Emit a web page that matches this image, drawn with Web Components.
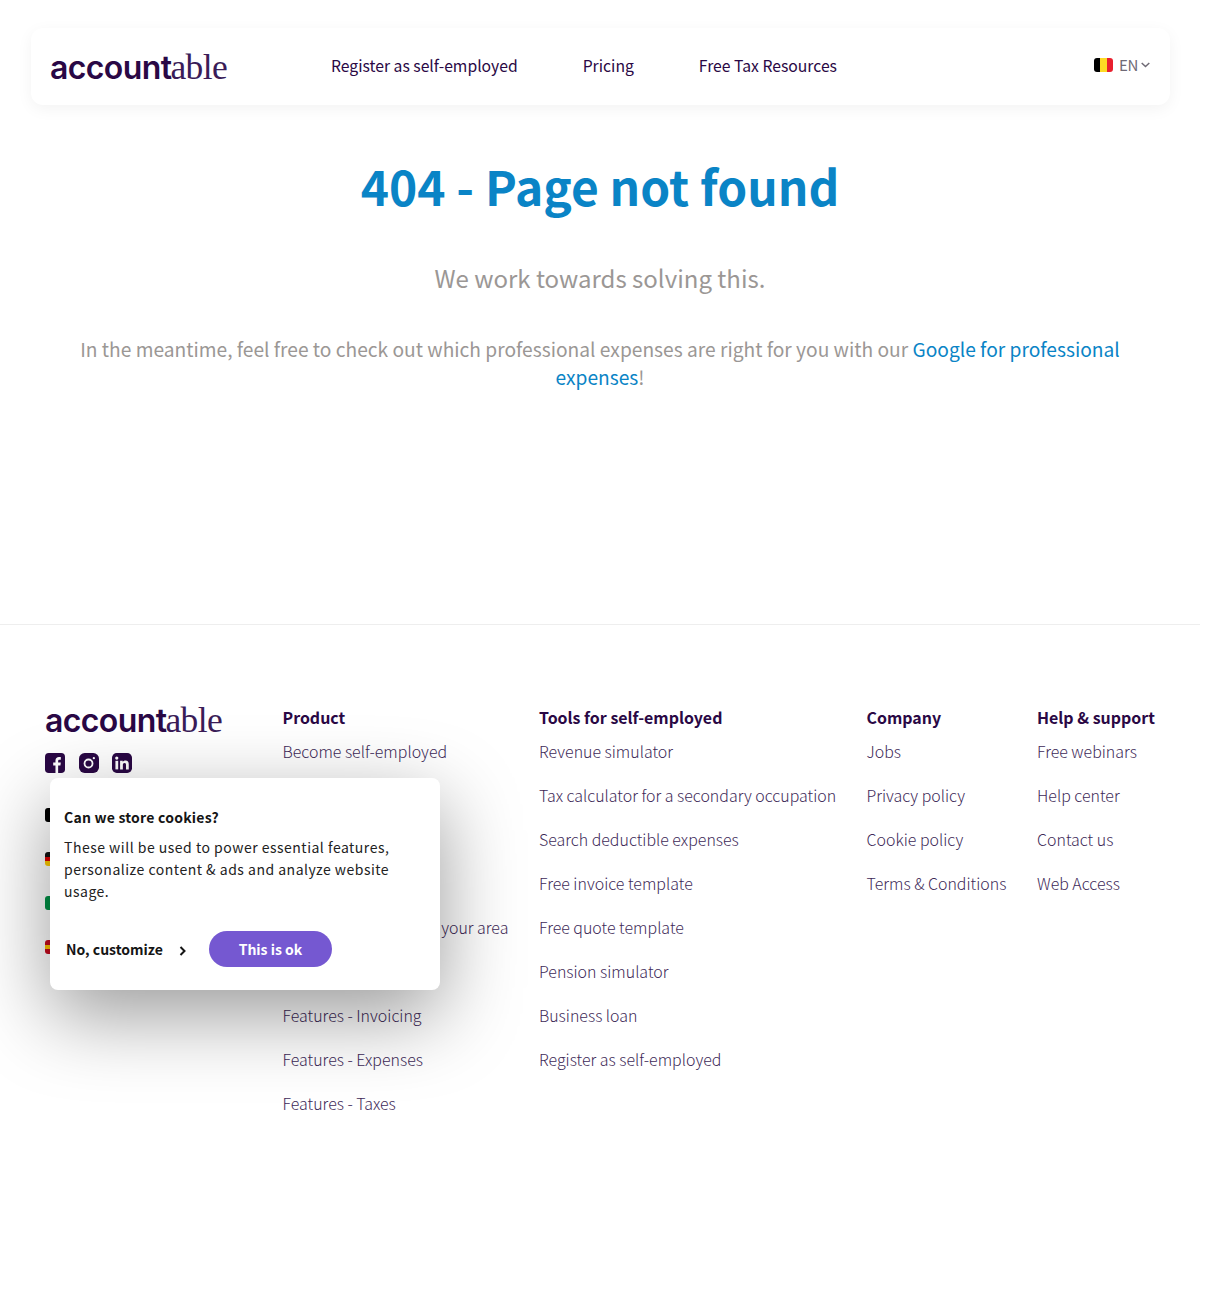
<!DOCTYPE html>
<html lang="en">
<head>
<meta charset="utf-8">
<title>404 - Page not found</title>
<style>
    html, body { margin: 0; padding: 0; background: #fff; }
    body {
        width: 1200px;
        font-family: "Noto Sans CJK JP", "Open Sans", sans-serif;
        color: #2a0845;
    }
</style>
</head>
<body>
<site-nav></site-nav>
<not-found></not-found>
<site-footer></site-footer>
<cookie-popup></cookie-popup>

<script>
const FONT = '"Noto Sans CJK JP", "Open Sans", sans-serif';

// logo: bold round letters + thin serif letters
class AppLogo extends HTMLElement {
    constructor() {
        super();
        this.attachShadow({ mode: "open" });
        this.shadowRoot.innerHTML = `
            <style>
                :host { display: block; color: #2a0845; white-space: nowrap; line-height: 40px; height: 40px; }
                .a { font: 600 32px/40px Inter, "Liberation Sans", sans-serif; letter-spacing: -0.6px; }
                .b { font: 400 35.5px/40px "Liberation Serif", serif; letter-spacing: -0.6px; margin-left: -1px; color: #3a1c58; }
            </style>
            <span class="a">account</span><span class="b">able</span>
        `;
    }
}
customElements.define("app-logo", AppLogo);

class FlagIcon extends HTMLElement {
    constructor() {
        super();
        this.attachShadow({ mode: "open" });
        const colors = (this.getAttribute("colors") || "#000,#fdda24,#e8202e").split(",");
        const dir = this.getAttribute("dir") === "h" ? "to bottom" : "to right";
        const n = colors.length;
        const stops = colors.map((c, i) => `${c} ${i / n * 100}% ${(i + 1) / n * 100}%`).join(",");
        this.shadowRoot.innerHTML = `
            <style>
                :host { display: block; width: 19px; height: 14px; border-radius: 3px; overflow: hidden; background: linear-gradient(${dir}, ${stops}); }
            </style>
        `;
    }
}
customElements.define("flag-icon", FlagIcon);

class LangPicker extends HTMLElement {
    constructor() {
        super();
        this.attachShadow({ mode: "open" });
        this.shadowRoot.innerHTML = `
            <style>
                :host { display: flex; align-items: center; font: 400 15px/20px ${FONT}; color: #6f6a75; letter-spacing: -.3px; padding-bottom: 3px; }
                span { margin-left: 6px; }
                svg { margin-left: 3px; display: block; }
            </style>
            <flag-icon></flag-icon>
            <span>EN</span>
            <svg width="9" height="6" viewBox="0 0 9 6" fill="none" stroke="#6f6a75" stroke-width="1.5"><path d="M.7 1l3.8 3.5L8.300 1"/></svg>
        `;
    }
}
customElements.define("lang-picker", LangPicker);

class SiteNav extends HTMLElement {
    constructor() {
        super();
        this.attachShadow({ mode: "open" });
        this.shadowRoot.innerHTML = `
            <style>
                :host { display: block; padding: 28px 30px 0 31px; }
                nav {
                    height: 77px;
                    box-sizing: border-box;
                    padding: 0 20px 0 19px;
                    display: flex;
                    align-items: center;
                    border-radius: 12px;
                    background: #fff;
                    box-shadow: 0 4px 16px rgba(0,0,0,.05);
                }
                ul { display: flex; gap: 65px; list-style: none; margin: 0 0 0 101px; padding: 0 0 2px; flex: 1; }
                a { color: #2a0845; text-decoration: none; font: 400 15.72px/24px ${FONT}; }
                app-logo { width: 180px; }
            </style>
            <nav>
                <app-logo></app-logo>
                <ul>
                    <li><a href="#">Register as self-employed</a></li>
                    <li><a href="#">Pricing</a></li>
                    <li><a href="#">Free Tax Resources</a></li>
                </ul>
                <lang-picker></lang-picker>
            </nav>
        `;
    }
}
customElements.define("site-nav", SiteNav);

class NotFound extends HTMLElement {
    constructor() {
        super();
        this.attachShadow({ mode: "open" });
        this.shadowRoot.innerHTML = `
            <style>
                :host { display: block; height: 520px; box-sizing: border-box; padding: 47px 79px 0; text-align: center; border-bottom: 1px solid #eee; color: #9b9795; }
                h1 { margin: 0; font: 700 47.9px/66px ${FONT}; color: #0a84c6; }
                h2 { margin: 40px 0 0; font: 400 24px/40px ${FONT}; }
                p { margin: 37px 0 0; font: 400 19.2px/28px ${FONT}; }
                a { color: #0a84c6; text-decoration: none; }
            </style>
            <h1>404 - Page not found</h1>
            <h2>We work towards solving this.</h2>
            <p>In the meantime, feel free to check out which professional expenses are right for you with our <a href="#">Google for professional expenses</a>!</p>
        `;
    }
}
customElements.define("not-found", NotFound);

class SocialLinks extends HTMLElement {
    constructor() {
        super();
        this.attachShadow({ mode: "open" });
        this.shadowRoot.innerHTML = `
            <style>
                :host { display: flex; gap: 13.5px; }
                svg { display: block; }
            </style>
            <svg width="20" height="20" viewBox="0 0 21 21">
                <rect width="21" height="21" rx="4" fill="#2a0845"/>
                <path fill="#fff" d="M11 21v-8H8.600v-3H11V8c0-2.500 1.500-3.800 3.700-3.800.8 0 1.500.1 1.900.1v2.700h-1.400c-1.100 0-1.400.6-1.400 1.400V10h2.800l-.4 3h-2.400v8z"/>
            </svg>
            <svg width="20" height="20" viewBox="0 0 21 21">
                <rect width="21" height="21" rx="6" fill="#2a0845"/>
                <circle cx="10" cy="11" r="4.200" fill="none" stroke="#fff" stroke-width="1.900"/>
                <circle cx="15.600" cy="5.400" r="1.200" fill="#fff"/>
            </svg>
            <svg width="20" height="20" viewBox="0 0 21 21">
                <rect width="21" height="21" rx="5" fill="#2a0845"/>
                <rect x="3.600" y="8.200" width="2.900" height="9" fill="#fff"/>
                <circle cx="5" cy="5.300" r="1.700" fill="#fff"/>
                <path fill="#fff" d="M8.500 8.200h2.800v1.300c.5-.9 1.600-1.500 2.900-1.500 2.700 0 3.400 1.700 3.400 4.200v5h-2.900v-4.500c0-1.200-.3-2.200-1.500-2.200-1.300 0-1.800 1-1.800 2.200v4.500H8.500z"/>
            </svg>
        `;
    }
}
customElements.define("social-links", SocialLinks);

class FooterCol extends HTMLElement {
    constructor() {
        super();
        this.attachShadow({ mode: "open" });
        const links = (this.getAttribute("links") || "").split("|");
        this.shadowRoot.innerHTML = `
            <style>
                :host { display: block; white-space: nowrap; }
                h4 { margin: 0 0 10px; font: 700 15.95px/24px ${FONT}; color: #2a0845; }
                ul { list-style: none; margin: 0; padding: 0; display: flex; flex-direction: column; gap: 20px; }
                li { min-height: 24px; }
                a { color: #3e2a58; text-decoration: none; font: 300 15.95px/24px ${FONT}; display: block; }
            </style>
            <h4>${this.getAttribute("title")}</h4>
            <ul>${links.map(l => `<li><a href="#">${l}</a></li>`).join("")}</ul>
        `;
    }
}
customElements.define("footer-col", FooterCol);

class SiteFooter extends HTMLElement {
    constructor() {
        super();
        this.attachShadow({ mode: "open" });
        this.shadowRoot.innerHTML = `
            <style>
                :host { display: block; height: 680px; box-sizing: border-box; padding: 80px 0 0 45px; }
                .row { display: flex; }
                .brand { width: 237.500px; }
                .brand app-logo { margin-top: -5px; }
                social-links { margin-top: 13px; }
                .flags { margin-top: 35px; display: flex; flex-direction: column; gap: 30px; }
                .c1 { width: 256.500px; }
                .c2 { width: 327.500px; }
                .c3 { width: 170.500px; }
            </style>
            <div class="row">
                <div class="brand">
                    <app-logo></app-logo>
                    <social-links></social-links>
                    <div class="flags">
                        <flag-icon colors="#000,#fdda24,#e8202e"></flag-icon>
                        <flag-icon dir="h" colors="#111,#d00,#fc0"></flag-icon>
                        <flag-icon colors="#009246,#fff,#ce2b37"></flag-icon>
                        <flag-icon dir="h" colors="#c60b1e,#ffc400,#c60b1e"></flag-icon>
                    </div>
                </div>
                <!-- rows covered by the cookie popup stay empty, their text can't be read in the reference -->
                <footer-col class="c1" title="Product" links="Become self-employed||||Find an accountant in your area||Features - Invoicing|Features - Expenses|Features - Taxes"></footer-col>
                <footer-col class="c2" title="Tools for self-employed" links="Revenue simulator|Tax calculator for a secondary occupation|Search deductible expenses|Free invoice template|Free quote template|Pension simulator|Business loan|Register as self-employed"></footer-col>
                <footer-col class="c3" title="Company" links="Jobs|Privacy policy|Cookie policy|Terms &amp; Conditions"></footer-col>
                <footer-col title="Help &amp; support" links="Free webinars|Help center|Contact us|Web Access"></footer-col>
            </div>
        `;
    }
}
customElements.define("site-footer", SiteFooter);

class CookiePopup extends HTMLElement {
    constructor() {
        super();
        this.attachShadow({ mode: "open" });
        this.shadowRoot.innerHTML = `
            <style>
                :host {
                    position: absolute;
                    left: 50px;
                    top: 778px;
                    width: 390px;
                    height: 212px;
                    box-sizing: border-box;
                    padding: 28px 14px 0;
                    background: #fff;
                    border-radius: 8px;
                    box-shadow: 0 25px 80px rgba(0,0,0,.4);
                    font-family: ${FONT};
                    color: #222;
                    letter-spacing: .5px;
                }
                h3 { margin: 0; font: 700 14px/22px ${FONT}; color: #151515; letter-spacing: .22px; }
                p { margin: 0; padding-top: 8px; font: 400 14px/22px ${FONT}; }
                .actions { display: flex; align-items: center; margin-top: 29px; padding-left: 2px; }
                .no { font: 700 14px/20px ${FONT}; color: #151515; letter-spacing: 0; width: 143px; display: flex; align-items: center; }
                .no svg { margin-left: 16px; margin-top: 3px; }
                button {
                    width: 123px; height: 36px; border: 0; border-radius: 18px;
                    background: #7558d1; color: #fff;
                    font: 700 14px/20px ${FONT}; letter-spacing: 0;
                }
            </style>
            <h3>Can we store cookies?</h3>
            <p>These will be used to power essential features, personalize content &amp; ads and analyze website usage.</p>
            <div class="actions">
                <span class="no">No, customize
                    <svg width="8" height="10" viewBox="0 0 8 10" fill="none" stroke="#151515" stroke-width="2"><path d="M1.500 1l4 4-4 4"/></svg>
                </span>
                <button>This is ok</button>
            </div>
        `;
    }
}
customElements.define("cookie-popup", CookiePopup);
</script>
</body>
</html>
